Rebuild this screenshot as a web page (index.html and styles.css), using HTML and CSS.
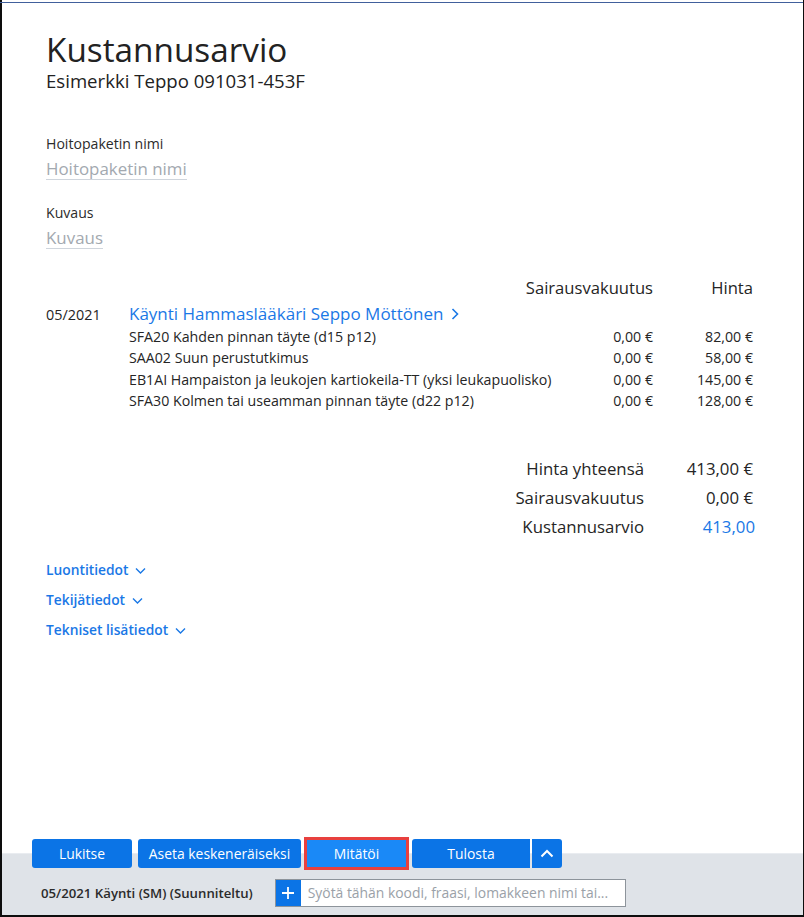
FILE: index.html
```html
<!DOCTYPE html>
<html lang="fi">
<head>
<meta charset="utf-8">
<title>Kustannusarvio</title>
<link rel="stylesheet" href="styles.css">
</head>
<body>
<div class="frame">
  <main class="content">
    <h1 class="title">Kustannusarvio</h1>
    <div class="subtitle">Esimerkki Teppo 091031-453F</div>

    <div class="field first">
      <div class="label">Hoitopaketin nimi</div>
      <div class="placeholder">Hoitopaketin nimi</div>
    </div>
    <div class="field">
      <div class="label">Kuvaus</div>
      <div class="placeholder">Kuvaus</div>
    </div>

    <div class="table">
      <div class="thead">
        <span></span>
        <span class="num">Sairausvakuutus</span>
        <span class="num">Hinta</span>
      </div>
      <div class="visit">
        <span class="date">05/2021</span>
        <a class="visit-link">Käynti Hammaslääkäri Seppo Möttönen
          <svg class="chev-right" width="10" height="14" viewBox="0 0 10 14"><path d="M2.5 2 L7.5 7 L2.5 12" fill="none" stroke="currentColor" stroke-width="1.6"/></svg>
        </a>
      </div>
      <div class="item"><span></span><span class="desc">SFA20 Kahden pinnan täyte (d15 p12)</span><span class="num">0,00 €</span><span class="num">82,00 €</span></div>
      <div class="item"><span></span><span class="desc">SAA02 Suun perustutkimus</span><span class="num">0,00 €</span><span class="num">58,00 €</span></div>
      <div class="item"><span></span><span class="desc">EB1AI Hampaiston ja leukojen kartiokeila-TT (yksi leukapuolisko)</span><span class="num">0,00 €</span><span class="num">145,00 €</span></div>
      <div class="item"><span></span><span class="desc">SFA30 Kolmen tai useamman pinnan täyte (d22 p12)</span><span class="num">0,00 €</span><span class="num">128,00 €</span></div>
    </div>

    <div class="totals">
      <span class="tl">Hinta yhteensä</span><span class="tv">413,00 €</span>
      <span class="tl">Sairausvakuutus</span><span class="tv">0,00 €</span>
      <span class="tl">Kustannusarvio</span><span class="tv blue">413,00</span>
    </div>

    <div class="toggles">
      <a class="toggle">Luontitiedot <svg class="chev-down" width="11" height="8" viewBox="0 0 11 8"><path d="M1 1.5 L5.5 6 L10 1.5" fill="none" stroke="currentColor" stroke-width="1.4"/></svg></a>
      <a class="toggle">Tekijätiedot <svg class="chev-down" width="11" height="8" viewBox="0 0 11 8"><path d="M1 1.5 L5.5 6 L10 1.5" fill="none" stroke="currentColor" stroke-width="1.4"/></svg></a>
      <a class="toggle">Tekniset lisätiedot <svg class="chev-down" width="11" height="8" viewBox="0 0 11 8"><path d="M1 1.5 L5.5 6 L10 1.5" fill="none" stroke="currentColor" stroke-width="1.4"/></svg></a>
    </div>
  </main>

  <footer class="footer">
    <div class="actions">
      <button class="btn w-lukitse">Lukitse</button>
      <button class="btn w-aseta">Aseta keskeneräiseksi</button>
      <button class="btn w-mitatoi focused">Mitätöi</button>
      <div class="split">
        <button class="btn w-tulosta split-main">Tulosta</button>
        <button class="btn split-toggle"><svg width="14" height="9" viewBox="0 0 14 9"><path d="M1.5 7.5 L7 2 L12.5 7.5" fill="none" stroke="#fff" stroke-width="2"/></svg></button>
      </div>
    </div>
    <div class="statusrow">
      <span class="status">05/2021 Käynti (SM) (Suunniteltu)</span>
      <div class="codeinput">
        <span class="plus"><svg width="14" height="14" viewBox="0 0 14 14"><path d="M7 1 V13 M1 7 H13" stroke="#fff" stroke-width="1.8"/></svg></span>
        <span class="codeph">Syötä tähän koodi, fraasi, lomakkeen nimi tai...</span>
      </div>
    </div>
  </footer>
</div>
</body>
</html>
```

FILE: styles.css
```css
* { box-sizing: border-box; }
html, body { margin: 0; padding: 0; background: #fff; }
body {
  font-family: "Open Sans", "Noto Sans", sans-serif;
  color: #252525;
}
.frame {
  width: 804px;
  height: 917px;
  margin: 0;
  border-left: 2px solid #0d0d0d;
  border-right: 1px solid #0d0d0d;
  border-bottom: 2px solid #0d0d0d;
  display: flex;
  flex-direction: column;
  position: relative;
}
.frame::before {
  content: "";
  display: block;
  height: 2px;
  border-bottom: 1px solid #41609c;
  margin-left: -2px;
  margin-top: 0;
}
.content {
  flex: 1;
  padding: 0 50px 0 44px;
}
.title {
  margin: 27px 0 0;
  font-size: 33.3px;
  font-weight: 400;
  line-height: 38px;
  color: #222;
}
.subtitle {
  margin-top: 1px;
  font-size: 18.6px;
  line-height: 24px;
  color: #222;
}
.field { display: flex; flex-direction: column; align-items: flex-start; }
.field.first { margin-top: 42px; }
.field + .field { margin-top: 24px; }
.label { font-size: 14.1px; line-height: 18px; color: #2b2b2b; }
.placeholder {
  margin-top: 5px;
  font-size: 16.9px;
  line-height: 21px;
  color: #a3a9b0;
  border-bottom: 1.5px solid #cfd5dc;
}
.table { margin-top: 28px; }
.thead {
  display: grid;
  grid-template-columns: 1fr auto 100px;
  font-size: 16.6px;
  line-height: 22px;
}
.item {
  display: grid;
  grid-template-columns: 83px 1fr 100px 100px;
  font-size: 14.2px;
  line-height: 21.3px;
}
.desc { white-space: nowrap; }
.num { text-align: right; white-space: nowrap; }
.visit { display: flex; align-items: baseline; margin-top: 4px; }
.date { width: 83px; font-size: 14.4px; line-height: 22px; }
.visit-link {
  color: #1a78e6;
  font-size: 17px;
  line-height: 22px;
}
.chev-right { vertical-align: -1px; margin-left: 2px; }
.totals {
  margin-top: 43px;
  display: grid;
  grid-template-columns: auto 109px;
  justify-content: end;
  font-size: 16.8px;
  line-height: 29px;
}
.tl { text-align: right; }
.tv { text-align: right; }
.tv.blue { color: #1a78e6; margin-right: -2px; }
.toggles {
  margin-top: 14px;
  display: flex;
  flex-direction: column;
  align-items: flex-start;
}
.toggle {
  color: #1a78e6;
  font-size: 13.8px;
  font-weight: 600;
  line-height: 30px;
}
.chev-down { margin-left: 3px; vertical-align: 0; }

.footer {
  height: 76px;
  flex: none;
  background: linear-gradient(to bottom, #fff 0, #fff 14px, #e9ecf0 14px, #e9ecf0 15px, #dfe3e8 15px);
}
.actions {
  display: flex;
  gap: 5px;
  padding-left: 30px;
}
.btn {
  height: 29px;
  border: 0;
  border-radius: 3px;
  background: #0b74e6;
  color: #fff;
  font-family: "Open Sans", "Noto Sans", sans-serif;
  font-size: 13.9px;
  padding: 0;
  display: inline-flex;
  align-items: center;
  justify-content: center;
}
.w-lukitse { width: 100px; margin-right: 1px; }
.w-aseta { width: 163px; }
.w-mitatoi { width: 101px; }
.focused {
  background: #1a89f7;
  border-radius: 0;
  outline: 3px solid #e8403e;
  outline-offset: -1px;
}
.split { display: flex; gap: 2px; }
.split-main { width: 118px; border-radius: 3px 0 0 3px; }
.split-toggle { width: 30px; border-radius: 0 3px 3px 0; }
.statusrow {
  display: flex;
  align-items: center;
  margin-top: 11px;
  padding-left: 39px;
  gap: 22px;
}
.status {
  font-size: 13.2px;
  font-weight: 600;
  color: #2b2b2b;
}
.codeinput {
  width: 351px;
  height: 28px;
  display: flex;
  align-items: stretch;
  border: 1px solid #8d949b;
  background: #fff;
}
.plus {
  width: 25px;
  background: #0b74e6;
  display: flex;
  align-items: center;
  justify-content: center;
}
.codeph {
  padding-left: 7px;
  font-size: 13.9px;
  line-height: 26px;
  color: #9aa1a8;
  white-space: nowrap;
  overflow: hidden;
}
```
